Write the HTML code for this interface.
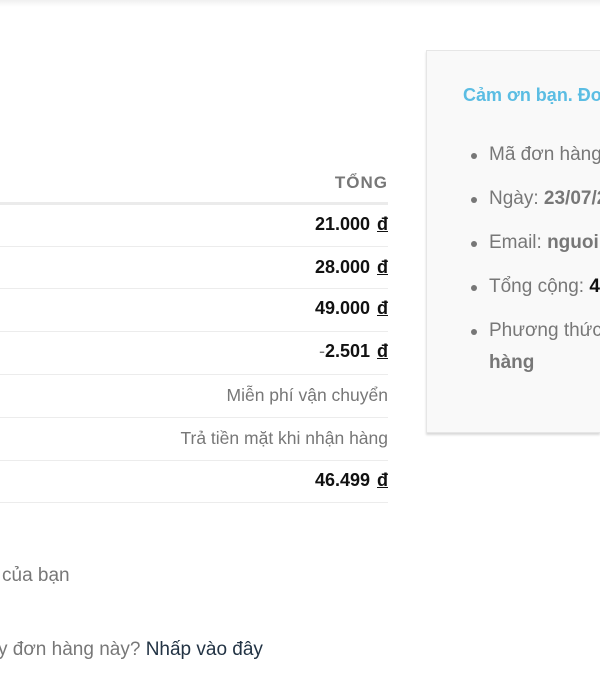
<!DOCTYPE html>
<html><head><meta charset="utf-8">
<style>
*{margin:0;padding:0;box-sizing:border-box}
html,body{width:600px;height:684px;overflow:hidden;background:#fff}
body{position:relative;font-family:"Liberation Sans",sans-serif;color:#777;font-size:18px}
.topsh{position:absolute;left:0;top:0;width:600px;height:7px;background:linear-gradient(#f0f0f0,#fff)}
.r{position:absolute;right:212px;text-align:right;white-space:nowrap;line-height:20px}
.b{font-weight:bold;color:#111;font-size:18px}
.b u{margin-left:7px}
.line{position:absolute;left:0;width:388px;height:1px;background:#ececec}
.card{position:absolute;left:426px;top:50px;width:174px;height:383px;background:#f9f9f9;border:1px solid #e6e6e6;border-right:none;box-shadow:0 2px 2px rgba(0,0,0,.15);overflow:hidden}
.card .t{position:absolute;left:36px;top:34px;color:#5bbde3;font-weight:bold;font-size:18px;white-space:nowrap}
.card ul{position:absolute;left:62px;top:92px;list-style:none;width:300px;color:#777;font-size:19px}
.card li{line-height:24px;margin-bottom:20px;white-space:nowrap;position:relative}
.card li::before{content:"";position:absolute;left:-18px;top:10px;width:6px;height:6px;border-radius:50%;background:#777}
.card li b{color:#777}
</style></head><body>
<div class="topsh"></div>
<div class="r" style="top:173px;font-weight:bold;letter-spacing:1px;font-size:17px;color:#777">TỔNG</div>
<div class="line" style="top:202px;height:3px;background:#ebebeb"></div>
<div class="r b" style="top:214px">21.000<u>đ</u></div>
<div class="line" style="top:246px"></div>
<div class="r b" style="top:257px">28.000<u>đ</u></div>
<div class="line" style="top:288px"></div>
<div class="r b" style="top:298px">49.000<u>đ</u></div>
<div class="line" style="top:331px"></div>
<div class="r b" style="top:341px"><span style="font-weight:normal;color:#777">-</span>2.501<u>đ</u></div>
<div class="line" style="top:374px"></div>
<div class="r" style="top:385px;font-size:17.5px">Miễn phí vận chuyển</div>
<div class="line" style="top:417px"></div>
<div class="r" style="top:428px;font-size:17.5px">Trả tiền mặt khi nhận hàng</div>
<div class="line" style="top:460px"></div>
<div class="r b" style="top:470px">46.499<u>đ</u></div>
<div class="line" style="top:502px"></div>
<div style="position:absolute;left:2px;top:565px;font-size:19px;white-space:nowrap">của bạn</div>
<div style="position:absolute;left:-2px;top:639px;font-size:19px;white-space:nowrap">y đơn hàng này? <span style="color:#223344">Nhấp vào đây</span></div>
<div class="card">
<div class="t">Cảm ơn bạn. Đơn hàng của bạn đã được nhận.</div>
<ul>
<li>Mã đơn hàng: <b>1234</b></li>
<li>Ngày: <b>23/07/2020</b></li>
<li>Email: <b>nguoimua@example.com</b></li>
<li>Tổng cộng: <b style="color:#111">46.499 đ</b></li>
<li>Phương thức thanh toán: <b>Trả tiền mặt khi nhận</b><b style="display:block;margin-top:8px">hàng</b></li>
</ul>
</div>
</body></html>
